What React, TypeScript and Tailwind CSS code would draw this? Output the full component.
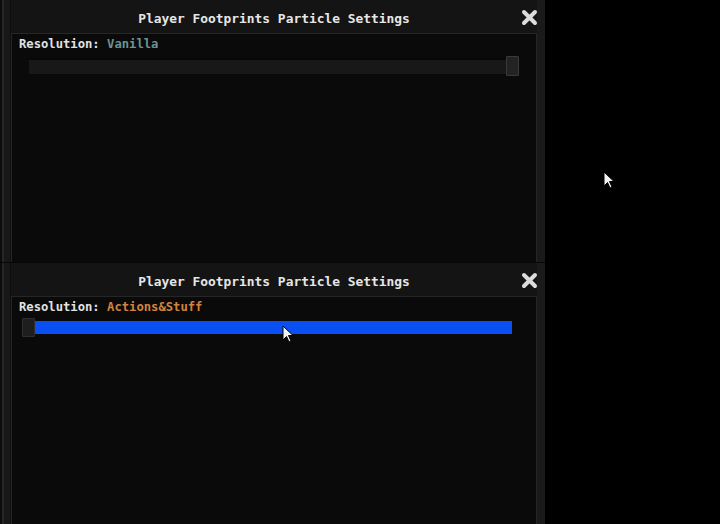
import React from "react";

const font = { fontFamily: '"DejaVu Sans Mono", "Liberation Mono", monospace' };

function CloseIcon() {
  return (
    <svg width="17" height="17" viewBox="0 0 17 17">
      <path
        d="M3 3 L14 14 M14 3 L3 14"
        stroke="#dcdcdc"
        strokeWidth="4"
        strokeLinecap="round"
      />
    </svg>
  );
}

function Pointer({ className }: { className: string }) {
  return (
    <svg
      className={className}
      width="13"
      height="19"
      viewBox="0 0 13 19"
    >
      <path
        d="M1 1 L1 15 L4.5 11.5 L7 17 L9 16 L6.5 10.5 L11 10.5 Z"
        fill="#f2f2f2"
        stroke="#000"
        strokeWidth="1"
        strokeLinejoin="round"
      />
    </svg>
  );
}

function Window({
  value,
  valueClass,
  children,
  height,
}: {
  value: string;
  valueClass: string;
  children: React.ReactNode;
  height: string;
}) {
  return (
    <div className={`flex w-[545px] ${height} bg-[#141414]`}>
      <div className="flex w-[11px] shrink-0">
        <div className="w-[2px] bg-[#0c0c0c]" />
        <div className="w-[2px] bg-[#262626]" />
        <div className="flex-1 bg-[#181818]" />
        <div className="w-[1px] bg-[#0e0e0e]" />
      </div>
      <div className="flex flex-1 flex-col">
        <div className="relative flex h-[33px] shrink-0 items-center justify-center pt-[5px]">
          <span
            style={font}
            className="text-[12.9px] font-bold text-[#e6e6e6]"
          >
            Player Footprints Particle Settings
          </span>
          <div className="absolute right-[-1px] top-[9px]">
            <CloseIcon />
          </div>
        </div>
        <div className="flex flex-1 flex-col border-l border-t border-r border-[#262626] bg-[#0a0a0a]">
          <div
            style={font}
            className="pl-[7px] pt-[2px] text-[12.2px] font-bold leading-[17px] text-[#e2e2e2]"
          >
            Resolution: <span className={valueClass}>{value}</span>
          </div>
          {children}
        </div>
      </div>
      <div className="w-[8px] shrink-0 bg-[#1a1a1a]" />
    </div>
  );
}

export default function App() {
  return (
    <div className="relative h-[524px] w-[720px] overflow-hidden bg-black">
      <div className="flex flex-col">
        <Window value="Vanilla" valueClass="text-[#6f9394]" height="h-[262px]">
          <div className="mt-[3px] flex items-center pl-[17px] pr-[17px]">
            <div className="flex h-[16px] flex-1 items-center border-t-2 border-[#070707] bg-[#181818]" />
            <div className="-ml-[13px] h-[20px] w-[13px] rounded-[1px] border border-[#3a3a3a] bg-[#232323]" />
          </div>
        </Window>
        <div className="h-[1px] w-[545px] bg-[#070707]" />
        <Window
          value="Actions&Stuff"
          valueClass="text-[#d3823f]"
          height="h-[261px]"
        >
          <div className="mt-[2px] flex items-center pl-[10px] pr-[24px]">
            <div className="h-[19px] w-[13px] rounded-[1px] border border-[#2e2e2e] bg-[#1e1e1e]" />
            <div className="h-[13px] flex-1 bg-[#0a4ff2]" />
          </div>
        </Window>
      </div>
      <Pointer className="absolute left-[603px] top-[171px]" />
      <Pointer className="absolute left-[282px] top-[325px]" />
    </div>
  );
}
